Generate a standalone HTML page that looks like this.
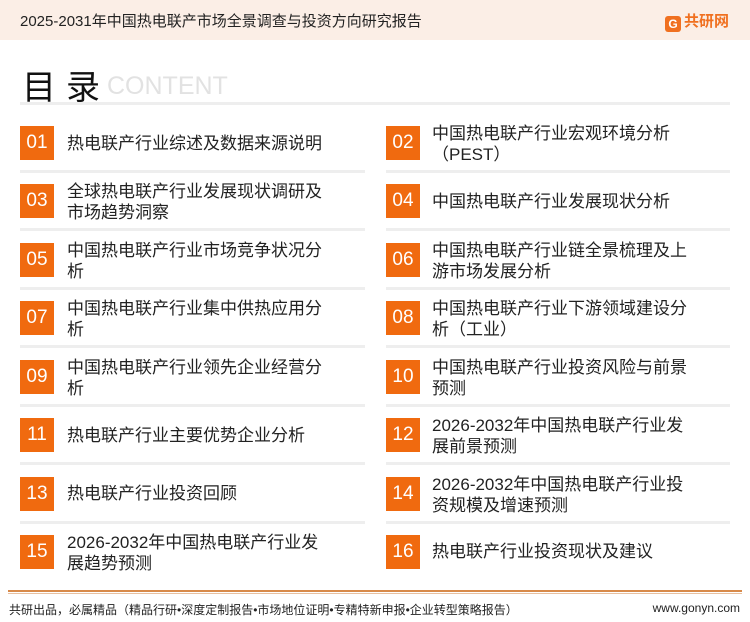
<!DOCTYPE html>
<html><head><meta charset="utf-8"><style>
*{margin:0;padding:0;box-sizing:border-box}
body{width:750px;height:622px;background:#fff;font-family:"Liberation Sans","Noto Sans CJK SC",sans-serif;position:relative;overflow:hidden;color:#222}
.hdr{position:absolute;left:0;top:0;width:750px;height:40px;background:#fbeee6}
.hdr .t{position:absolute;left:20px;top:10px;font-size:15px;color:#222}
.logo{position:absolute;left:665px;top:10px;font-size:15px;font-weight:bold;color:#f07020}
.logo span{display:inline-block;width:16px;height:16px;background:#f07020;border-radius:3px;vertical-align:-2px;margin-right:3px;color:#fff;font-size:12px;text-align:center;line-height:16px}
.ttl{position:absolute;left:22px;top:60px;font-size:34px;color:#111;letter-spacing:10px}
.ct{position:absolute;left:107px;top:72px;font-size:25px;color:#e2e2e2}
.ln{position:absolute;height:3px;background:#eee}
.box{position:absolute;width:34px;height:34px;background:#f06a0f;color:#fff;font-size:19px;text-align:center;line-height:34px}
.tx{position:absolute;font-size:17px;line-height:21px;color:#222;width:262px}
.foot1{position:absolute;left:8px;top:590px;width:734px;height:2px;background:#d88a4a}
.foot2{position:absolute;left:8px;top:593px;width:734px;height:1px;background:#e8c0a0}
.ft{position:absolute;left:9px;top:601px;font-size:12px;color:#222}
.fr{position:absolute;right:10px;top:601px;font-size:12px;color:#222}
</style></head><body>
<div class="hdr"><div class="t">2025-2031年中国热电联产市场全景调查与投资方向研究报告</div><div class="logo"><span>G</span>共研网</div></div>
<div class="ttl">目录</div><div class="ct">CONTENT</div>
<div class="ln" style="left:20px;top:102px;width:710px"></div>

<div class="box" style="left:20px;top:126px">01</div><div class="tx" style="left:67px;top:133px">热电联产行业综述及数据来源说明</div>
<div class="box" style="left:386px;top:126px">02</div><div class="tx" style="left:432px;top:123px;width:250px">中国热电联产行业宏观环境分析（PEST）</div>
<div class="box" style="left:20px;top:184px">03</div><div class="tx" style="left:67px;top:181px">全球热电联产行业发展现状调研及市场趋势洞察</div>
<div class="box" style="left:386px;top:184px">04</div><div class="tx" style="left:432px;top:191px">中国热电联产行业发展现状分析</div>
<div class="box" style="left:20px;top:243px">05</div><div class="tx" style="left:67px;top:240px">中国热电联产行业市场竞争状况分析</div>
<div class="box" style="left:386px;top:243px">06</div><div class="tx" style="left:432px;top:240px">中国热电联产行业链全景梳理及上游市场发展分析</div>
<div class="box" style="left:20px;top:301px">07</div><div class="tx" style="left:67px;top:298px">中国热电联产行业集中供热应用分析</div>
<div class="box" style="left:386px;top:301px">08</div><div class="tx" style="left:432px;top:298px">中国热电联产行业下游领域建设分析（工业）</div>
<div class="box" style="left:20px;top:360px">09</div><div class="tx" style="left:67px;top:357px">中国热电联产行业领先企业经营分析</div>
<div class="box" style="left:386px;top:360px">10</div><div class="tx" style="left:432px;top:357px">中国热电联产行业投资风险与前景预测</div>
<div class="box" style="left:20px;top:418px">11</div><div class="tx" style="left:67px;top:425px">热电联产行业主要优势企业分析</div>
<div class="box" style="left:386px;top:418px">12</div><div class="tx" style="left:432px;top:415px">2026-2032年中国热电联产行业发展前景预测</div>
<div class="box" style="left:20px;top:477px">13</div><div class="tx" style="left:67px;top:483px">热电联产行业投资回顾</div>
<div class="box" style="left:386px;top:477px">14</div><div class="tx" style="left:432px;top:474px">2026-2032年中国热电联产行业投资规模及增速预测</div>
<div class="box" style="left:20px;top:535px">15</div><div class="tx" style="left:67px;top:532px">2026-2032年中国热电联产行业发展趋势预测</div>
<div class="box" style="left:386px;top:535px">16</div><div class="tx" style="left:432px;top:541px">热电联产行业投资现状及建议</div>

<div class="ln" style="left:20px;top:170px;width:345px"></div><div class="ln" style="left:386px;top:170px;width:344px"></div>
<div class="ln" style="left:20px;top:228px;width:345px"></div><div class="ln" style="left:386px;top:228px;width:344px"></div>
<div class="ln" style="left:20px;top:287px;width:345px"></div><div class="ln" style="left:386px;top:287px;width:344px"></div>
<div class="ln" style="left:20px;top:345px;width:345px"></div><div class="ln" style="left:386px;top:345px;width:344px"></div>
<div class="ln" style="left:20px;top:404px;width:345px"></div><div class="ln" style="left:386px;top:404px;width:344px"></div>
<div class="ln" style="left:20px;top:462px;width:345px"></div><div class="ln" style="left:386px;top:462px;width:344px"></div>
<div class="ln" style="left:20px;top:521px;width:345px"></div><div class="ln" style="left:386px;top:521px;width:344px"></div>

<div class="foot1"></div><div class="foot2"></div>
<div class="ft">共研出品，必属精品（精品行研•深度定制报告•市场地位证明•专精特新申报•企业转型策略报告）</div>
<div class="fr">www.gonyn.com</div>
</body></html>
